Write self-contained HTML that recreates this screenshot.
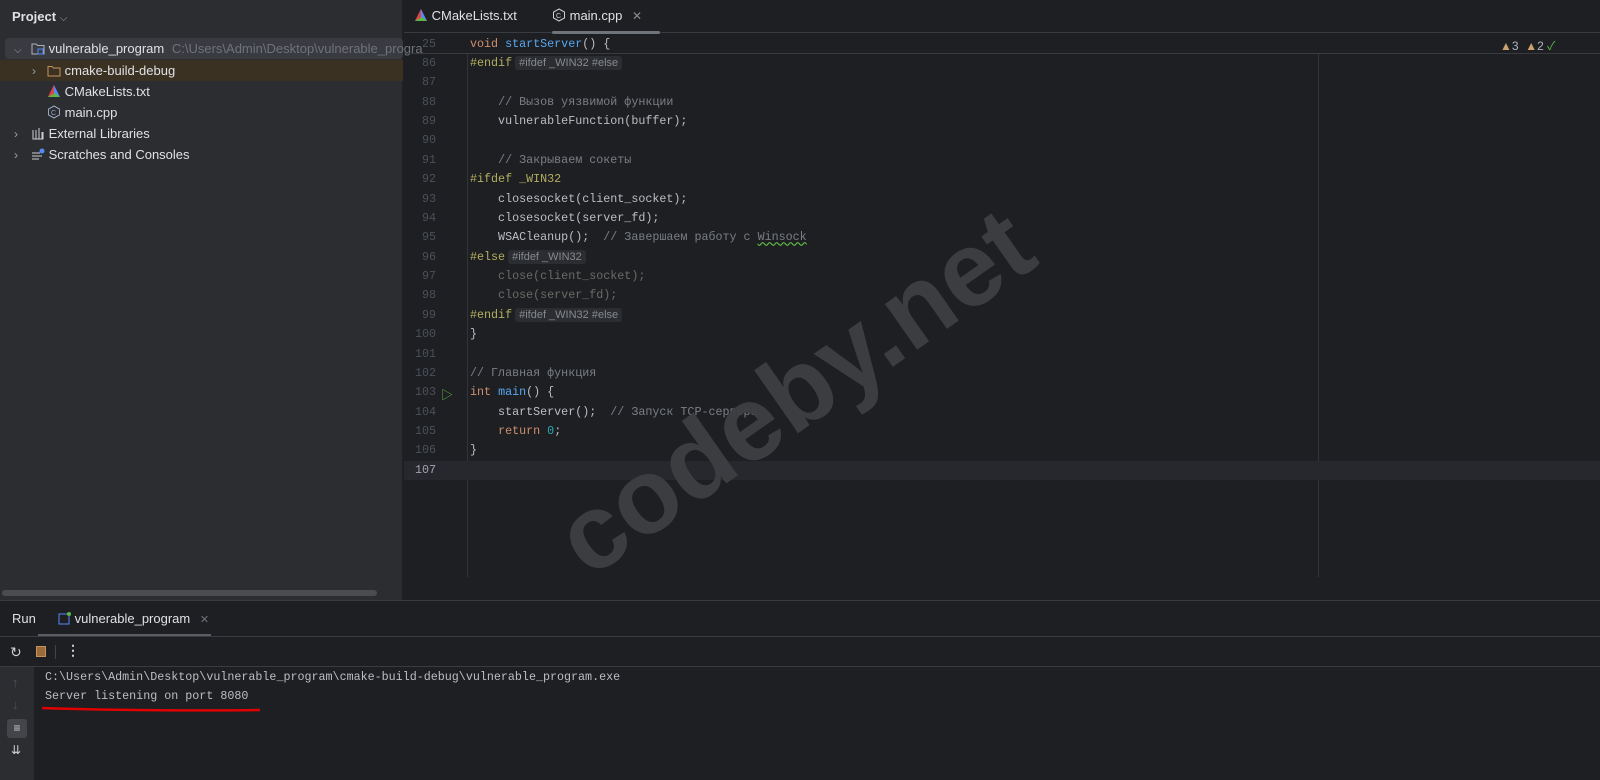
<!DOCTYPE html>
<html><head><meta charset="utf-8"><style>
*{margin:0;padding:0;box-sizing:border-box}
body{width:1600px;height:779px;background:#1e1f22;position:relative;overflow:hidden;font-family:"Liberation Sans","Noto Sans CJK SC",sans-serif;color:#dfe1e5;font-size:13px}
.abs{position:absolute}
#left{left:0;top:0;width:403px;height:600px;background:#2b2d30;border-right:1px solid #1e1f22}
.tr{position:absolute;height:21px;line-height:21px;white-space:nowrap;font-size:13px;color:#dfe1e5}
.code{position:absolute;left:470px;font-family:"Liberation Mono","Noto Sans CJK SC",monospace;font-size:11.7px;white-space:pre;color:#bcbec4;height:19.4px;line-height:19.4px}
.ln{position:absolute;left:404px;width:32px;text-align:right;font-family:"Liberation Mono",monospace;font-size:11.7px;color:#4b5059;line-height:19.4px}
.k{color:#cf8e6d}.f{color:#56a8f5}.c{color:#7a7e85}.p{color:#b3ae60}.d{color:#6b6a66}.n{color:#2aacb8}
.pill{font-family:"Liberation Sans",sans-serif;font-size:11px;background:#2b2d30;color:#868a91;border-radius:3px;padding:1px 4px;margin-left:3px}
#bottom{left:0;top:600px;width:1600px;height:179px;background:#1e1f22;border-top:1px solid #393b40}
.cons{position:absolute;left:45px;font-family:"Liberation Mono",monospace;font-size:11.7px;color:#bcbec4;white-space:pre}
</style></head><body>
<div id="left" class="abs">
  <div class="tr" style="left:12px;top:6px;font-weight:bold;">Project <span style="font-weight:normal;font-size:10px;color:#9da0a8">⌵</span></div>
  <div class="abs" style="left:5px;top:38px;width:398px;height:21px;background:#393b40;border-radius:4px"></div>
  <div class="abs" style="left:0;top:60px;width:403px;height:21px;background:#3a3123"></div>
  <div class="tr" style="left:14px;top:38px"><span style="color:#9da0a8;font-size:10px">⌵</span></div>
  <div class="tr" style="left:31px;top:38px"><svg width="14" height="13" style="vertical-align:-2px"><path d="M1 2h4l1.5 1.5H13V12H1z" fill="none" stroke="#aeb3c0"/><rect x="7" y="7" width="5" height="5" fill="none" stroke="#548af7"/></svg> vulnerable_program <span style="color:#6f737a;margin-left:4px">C:\Users\Admin\Desktop\vulnerable_progra</span></div>
  <div class="tr" style="left:32px;top:60px"><span style="color:#9da0a8;font-size:12px">›</span></div>
  <div class="tr" style="left:47px;top:60px"><svg width="14" height="12" style="vertical-align:-2px"><path d="M1 1.5h4l1.5 1.5H13V11H1z" fill="none" stroke="#c6925a"/></svg> cmake-build-debug</div>
  <div class="tr" style="left:47px;top:81px"><svg width="14" height="14" style="vertical-align:-2px"><path d="M7 1L1 13h12z" fill="#548af7"/><path d="M7 1L1 13h6z" fill="#e04343"/><path d="M1 13h12l-5-4z" fill="#5fb846"/></svg> CMakeLists.txt</div>
  <div class="tr" style="left:47px;top:102px"><svg width="14" height="14" style="vertical-align:-2px"><path d="M7 1l5.5 3v6L7 13 1.5 10V4z" fill="none" stroke="#9aa7c4"/><text x="4" y="10" font-size="7" fill="#9aa7c4" font-family="Liberation Sans">C</text></svg> main.cpp</div>
  <div class="tr" style="left:14px;top:123px"><span style="color:#9da0a8;font-size:12px">›</span></div>
  <div class="tr" style="left:31px;top:123px"><svg width="14" height="13" style="vertical-align:-2px"><path d="M2 3v9h10V5M5 3v9M8 1v11M11 5v7" fill="none" stroke="#ced0d6"/></svg> External Libraries</div>
  <div class="tr" style="left:14px;top:144px"><span style="color:#9da0a8;font-size:12px">›</span></div>
  <div class="tr" style="left:31px;top:144px"><svg width="14" height="13" style="vertical-align:-2px"><path d="M1 5h8M1 8h10M1 11h7" stroke="#ced0d6"/><circle cx="11" cy="3" r="2.5" fill="#548af7"/></svg> Scratches and Consoles</div>
  <div class="abs" style="left:2px;top:590px;width:375px;height:6px;background:#4a4c50;border-radius:3px"></div>
</div>

<div class="abs" style="left:404px;top:0;width:1196px;height:33px;background:#1e1f22;border-bottom:1px solid #393b40"></div>
<div class="tr" style="left:414px;top:5px"><svg width="14" height="14" style="vertical-align:-2px"><path d="M7 1L1 13h12z" fill="#548af7"/><path d="M7 1L1 13h6z" fill="#e04343"/><path d="M1 13h12l-5-4z" fill="#5fb846"/></svg> CMakeLists.txt</div>
<div class="tr" style="left:552px;top:5px"><svg width="14" height="14" style="vertical-align:-2px"><path d="M7 1l5.5 3v6L7 13 1.5 10V4z" fill="none" stroke="#ced0d6"/><text x="4" y="10" font-size="7" fill="#ced0d6" font-family="Liberation Sans">C</text></svg> main.cpp <span style="color:#868a91;margin-left:6px;font-size:12px">✕</span></div>
<div class="abs" style="left:552px;top:31px;width:108px;height:3px;background:#6f737a;border-radius:2px"></div>

<div class="abs" style="left:404px;top:53px;width:1196px;height:1px;background:#393b40"></div>
<div class="abs" style="left:467px;top:54px;width:1px;height:523px;background:#313438"></div>
<div class="abs" style="left:1318px;top:54px;width:1px;height:523px;background:#313438"></div>
<div class="abs" style="left:404px;top:461px;width:1196px;height:19px;background:#26282e"></div>
<div class="abs" style="left:1500px;top:37px;font-size:12px;color:#aeb3c0"><span style="color:#c9a26d">▲</span>3 &nbsp;<span style="color:#c9a26d">▲</span>2 <span style="color:#5fb846">✓</span></div>

<div class="ln" style="top:34.5px">25</div><div class="code" style="top:34.5px"><span class="k">void</span> <span class="f">startServer</span>() {</div>
<div class="ln" style="top:53.9px">86</div><div class="code" style="top:53.9px"><span class="p">#endif</span><span class="pill">#ifdef _WIN32 #else</span></div>
<div class="ln" style="top:73.3px">87</div>
<div class="ln" style="top:92.6px">88</div><div class="code" style="top:92.6px">    <span class="c">// Вызов уязвимой функции</span></div>
<div class="ln" style="top:112px">89</div><div class="code" style="top:112px">    vulnerableFunction(buffer);</div>
<div class="ln" style="top:131.4px">90</div>
<div class="ln" style="top:150.8px">91</div><div class="code" style="top:150.8px">    <span class="c">// Закрываем сокеты</span></div>
<div class="ln" style="top:170.1px">92</div><div class="code" style="top:170.1px"><span class="p">#ifdef _WIN32</span></div>
<div class="ln" style="top:189.5px">93</div><div class="code" style="top:189.5px">    closesocket(client_socket);</div>
<div class="ln" style="top:208.9px">94</div><div class="code" style="top:208.9px">    closesocket(server_fd);</div>
<div class="ln" style="top:228.3px">95</div><div class="code" style="top:228.3px">    WSACleanup();  <span class="c">// Завершаем работу с <span style="text-decoration:underline wavy #5fb846">Winsock</span></span></div>
<div class="ln" style="top:247.6px">96</div><div class="code" style="top:247.6px"><span class="p">#else</span><span class="pill">#ifdef _WIN32</span></div>
<div class="ln" style="top:267px">97</div><div class="code d" style="top:267px">    close(client_socket);</div>
<div class="ln" style="top:286.4px">98</div><div class="code d" style="top:286.4px">    close(server_fd);</div>
<div class="ln" style="top:305.8px">99</div><div class="code" style="top:305.8px"><span class="p">#endif</span><span class="pill">#ifdef _WIN32 #else</span></div>
<div class="ln" style="top:325.1px">100</div><div class="code" style="top:325.1px">}</div>
<div class="ln" style="top:344.5px">101</div>
<div class="ln" style="top:363.9px">102</div><div class="code" style="top:363.9px"><span class="c">// Главная функция</span></div>
<div class="ln" style="top:383.3px">103</div><div class="abs" style="left:441px;top:386px;color:#5fb846;font-size:12px">▷</div><div class="code" style="top:383.3px"><span class="k">int</span> <span class="f">main</span>() {</div>
<div class="ln" style="top:402.6px">104</div><div class="code" style="top:402.6px">    startServer();  <span class="c">// Запуск TCP-сервера</span></div>
<div class="ln" style="top:422px">105</div><div class="code" style="top:422px">    <span class="k">return</span> <span class="n">0</span>;</div>
<div class="ln" style="top:441.4px">106</div><div class="code" style="top:441.4px">}</div>
<div class="ln" style="top:460.8px;color:#a1a3ab">107</div>

<div class="abs" style="left:795px;top:392px;transform:translate(-50%,-50%) rotate(-35deg);font-family:'Liberation Sans',sans-serif;font-weight:bold;font-size:106px;color:#3e3f42;white-space:nowrap;opacity:.95">codeby.net</div>

<div id="bottom" class="abs">
  <div class="tr" style="left:12px;top:7px">Run</div>
  <div class="tr" style="left:58px;top:7px"><svg width="13" height="13" style="vertical-align:-2px"><rect x="1" y="2" width="10" height="10" fill="none" stroke="#548af7"/><circle cx="11" cy="2" r="2" fill="#5fb846"/></svg> vulnerable_program <span style="color:#6f737a;margin-left:6px;font-size:11px">✕</span></div>
  <div class="abs" style="left:38px;top:33px;width:173px;height:2px;background:#5a5d63"></div>
  <div class="abs" style="left:0;top:35px;width:1600px;height:1px;background:#393b40"></div>
  <div class="abs" style="left:10px;top:43px;color:#ced0d6;font-size:14px">↻</div>
  <div class="abs" style="left:36px;top:45px;width:10px;height:11px;background:#9c6b3c;border:1px solid #c6925a"></div>
  <div class="abs" style="left:55px;top:44px;width:1px;height:14px;background:#43454a"></div>
  <div class="abs" style="left:66px;top:41px;color:#ced0d6;font-size:14px;font-weight:bold">⋮</div>
  <div class="abs" style="left:0;top:65px;width:1600px;height:1px;background:#393b40"></div>
  <div class="abs" style="left:0;top:66px;width:34px;height:113px;background:#2b2d30"></div>
  <div class="abs" style="left:12px;top:74px;color:#4b5059;font-size:13px">↑</div>
  <div class="abs" style="left:12px;top:96px;color:#4b5059;font-size:13px">↓</div>
  <div class="abs" style="left:7px;top:118px;width:20px;height:19px;background:#43454a;border-radius:3px;color:#ced0d6;font-size:12px;text-align:center;line-height:19px">≡</div>
  <div class="abs" style="left:11px;top:142px;color:#ced0d6;font-size:12px">⇊</div>
  <div class="cons" style="top:69px">C:\Users\Admin\Desktop\vulnerable_program\cmake-build-debug\vulnerable_program.exe</div>
  <div class="cons" style="top:88px">Server listening on port 8080</div>
  <svg class="abs" style="left:40px;top:104px" width="225" height="8"><path d="M2 3 C60 5 150 6 220 5" stroke="#e00000" stroke-width="2.5" fill="none"/></svg>
</div>
</body></html>
